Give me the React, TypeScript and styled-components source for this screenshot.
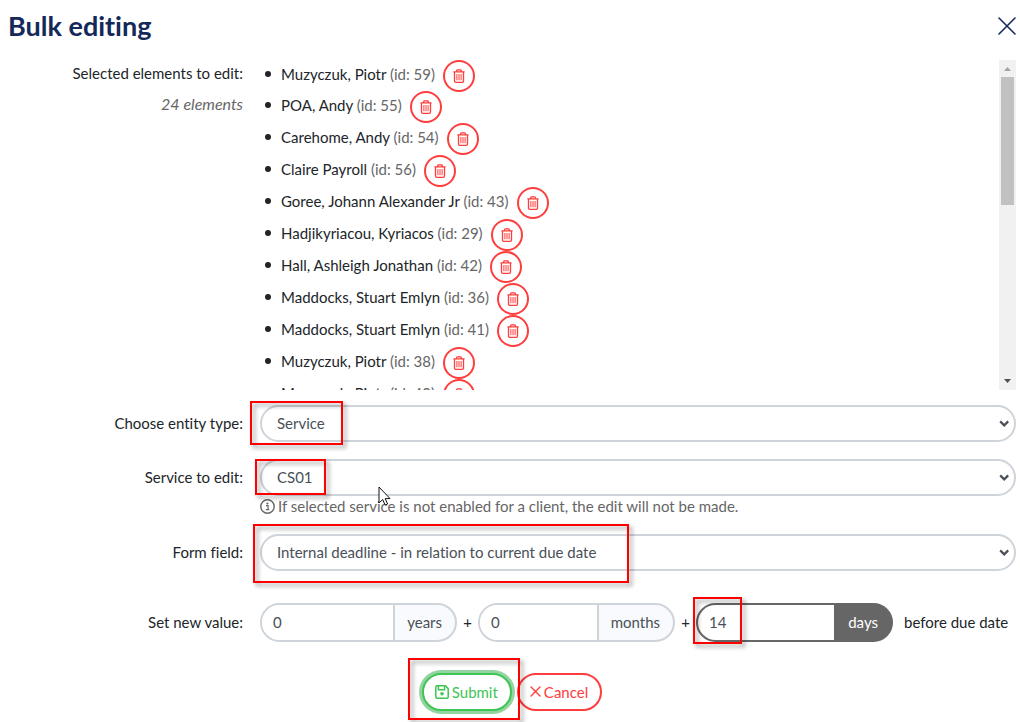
import React from "react";
import styled, { createGlobalStyle } from "styled-components";

const GlobalStyle = createGlobalStyle`
  *, *::before, *::after { box-sizing: border-box; }
  body {
    margin: 0;
    background: #fff;
    color: #212529;
    font: 15px/24px Lato, "Liberation Sans", sans-serif;
    font-variant-ligatures: none;
  }
  button, input, select {
    font: inherit;
    font-variant-ligatures: inherit;
  }
`;

const Page = styled.main`
  padding: 0 4px 11px 8px;
`;

const Header = styled.header`
  display: flex;
  align-items: center;
  justify-content: space-between;
  height: 60px;
  padding-bottom: 8px;
`;

const Title = styled.h1`
  margin: 0;
  color: #14295a;
  font-size: 27px;
  line-height: 34px;
  font-weight: 700;
`;

const CloseButton = styled.button`
  display: flex;
  padding: 0;
  border: 0;
  background: none;
  color: #14295a;
`;

const FormRow = styled.div<{ $gap?: number }>`
  display: grid;
  grid-template-columns: minmax(0, 1fr) minmax(0, 3fr);
  align-items: start;
  margin-bottom: ${(p) => p.$gap ?? 17}px;
`;

const LabelCell = styled.div<{ $top?: number }>`
  padding: ${(p) => p.$top ?? 6}px 17px 0 0;
  text-align: right;
`;

const Count = styled.p`
  margin: 7px 0 0;
  color: #666;
  font-size: 16px;
  font-style: italic;
`;

const ListPane = styled.div`
  display: flex;
  height: 330px;
  overflow: hidden;
`;

const ElementList = styled.ul`
  flex: 1;
  margin: 0;
  padding: 0 0 0 5px;
  list-style: none;
`;

const ElementItem = styled.li`
  display: flex;
  align-items: flex-start;
  gap: 8px;
  height: 32px;

  &:first-child { height: 31px; }

  &::before {
    content: "";
    width: 6px;
    height: 6px;
    margin: 11px 2px 0 0;
    border-radius: 50%;
    background: #212529;
  }
`;

const ElementName = styled.span`
  padding-top: 2px;
`;

const Muted = styled.span`
  color: #666;
`;

const DeleteButton = styled.button`
  display: flex;
  flex-shrink: 0;
  align-items: center;
  justify-content: center;
  width: 32px;
  height: 32px;
  padding: 0;
  border: 2px solid #ff3d3d;
  border-radius: 50%;
  background: #fff;
  color: #ff3d3d;
`;

const Scrollbar = styled.div`
  display: flex;
  flex-direction: column;
  width: 17px;
  background: #f1f1f1;
`;

const ScrollArrow = styled.svg`
  width: 17px;
  height: 17px;
`;

const ScrollTrack = styled.div`
  flex: 1;
  padding: 0 2px;
`;

const ScrollThumb = styled.div`
  height: 128px;
  background: #c1c1c1;
`;

const Field = styled.div`
  position: relative;
`;

const Select = styled.select`
  appearance: none;
  display: block;
  width: 100%;
  height: 37px;
  padding: 0 24px 1px 15px;
  border: 2px solid #ced4da;
  border-radius: 19px;
  background: #fff;
  color: #495057;
`;

const Chevron = styled.svg`
  position: absolute;
  top: 15px;
  right: 6px;
  pointer-events: none;
`;

const Help = styled.p`
  display: flex;
  align-items: center;
  gap: 3px;
  margin: 0;
  color: #666;
  line-height: 20px;
`;

const Values = styled.div`
  display: flex;
  align-items: center;
`;

const Plus = styled.span`
  width: 21px;
  padding-bottom: 2px;
  text-align: center;
`;

const Suffix = styled.span`
  padding: 0 0 1px 11px;
  white-space: nowrap;
`;

const UnitGroup = styled.div<{ $dark?: boolean }>`
  position: relative;
  display: flex;
  flex: 0 1 197px;
  min-width: 0;
  height: 39px;
  border: 2px solid ${(p) => (p.$dark ? "#666" : "#ced4da")};
  border-radius: 20px;
  background: ${(p) => (p.$dark ? "#666" : "#f8fafd")};
`;

const UnitInput = styled.input`
  flex: 1;
  min-width: 0;
  padding: 0 11px 1px;
  border: 0;
  border-radius: 18px 0 0 18px;
  background: #fff;
  color: #495057;
  outline: none;
`;

const UnitLabel = styled.label<{ $dark?: boolean }>`
  display: flex;
  align-items: center;
  padding: 0 13px 1px ${(p) => (p.$dark ? 14 : 12)}px;
  border-left: ${(p) => (p.$dark ? "0" : "2px solid #ced4da")};
  color: ${(p) => (p.$dark ? "#fff" : "#495057")};
`;

const Actions = styled.div`
  display: flex;
  justify-content: center;
  gap: 5px;
`;

const ActionSlot = styled.div`
  position: relative;
`;

const ActionButton = styled.button<{ $tone: string; $ring?: string }>`
  display: flex;
  align-items: center;
  gap: 3px;
  height: 38px;
  padding: 0 12px 1px 11px;
  border: 2px solid ${(p) => p.$tone};
  border-radius: 19px;
  background: #fff;
  color: ${(p) => p.$tone};
  box-shadow: ${(p) => (p.$ring ? `0 0 0 3px ${p.$ring}` : "none")};
`;

const Highlight = styled.div<{ $x: number; $y: number; $w: number; $h: number }>`
  position: absolute;
  z-index: 1;
  left: ${(p) => p.$x}px;
  top: ${(p) => p.$y}px;
  width: ${(p) => p.$w}px;
  height: ${(p) => p.$h}px;
  border: 2px solid #fe0000;
  filter: drop-shadow(3px 3px 2px rgba(0, 0, 0, 0.4));
  pointer-events: none;
`;

const Pointer = styled.svg`
  position: absolute;
  z-index: 2;
  left: 118px;
  top: 27px;
  pointer-events: none;
`;

const elements = [
  ["Muzyczuk, Piotr", 59],
  ["POA, Andy", 55],
  ["Carehome, Andy", 54],
  ["Claire Payroll", 56],
  ["Goree, Johann Alexander Jr", 43],
  ["Hadjikyriacou, Kyriacos", 29],
  ["Hall, Ashleigh Jonathan", 42],
  ["Maddocks, Stuart Emlyn", 36],
  ["Maddocks, Stuart Emlyn", 41],
  ["Muzyczuk, Piotr", 38],
  ["Muzyczuk, Piotr", 40],
] as const;

const Cross = ({ size, stroke }: { size: number; stroke: number }) => (
  <svg width={size} height={size} viewBox={`0 0 ${size} ${size}`} aria-hidden="true">
    <path
      d={`M1 1L${size - 1} ${size - 1}M${size - 1} 1L1 ${size - 1}`}
      fill="none"
      stroke="currentColor"
      strokeWidth={stroke}
      strokeLinecap="round"
    />
  </svg>
);

const TrashIcon = () => (
  <svg width="12" height="14" viewBox="0 0 12 14" fill="none" stroke="currentColor" aria-hidden="true">
    <path d="M.4 2.8h11.2M3.2 2.6L4.2.8h3.6l1 1.8" strokeWidth="1.3" strokeLinejoin="round" />
    <path d="M1.5 3v9q0 1.3 1.3 1.3h6.4q1.3 0 1.3-1.3V3" strokeWidth="1.3" />
    <path d="M3.9 5v6.3M6 5v6.3M8.1 5v6.3" strokeWidth="1" />
  </svg>
);

const SaveIcon = () => (
  <svg width="14" height="14" viewBox="0 0 14 14" fill="none" stroke="currentColor" strokeWidth="1.5" aria-hidden="true">
    <path d="M2 .8h8.4l2.8 2.8V12q0 1.2-1.2 1.2H2Q.8 13.2.8 12V2Q.8.8 2 .8z" strokeLinejoin="round" />
    <path d="M3.4 1v3.8h6.2V1" />
    <circle cx="7" cy="8.8" r="1.8" fill="currentColor" stroke="none" />
  </svg>
);

const InfoIcon = () => (
  <svg width="15" height="15" viewBox="0 0 15 15" aria-hidden="true">
    <circle cx="7.5" cy="7.5" r="6.7" fill="none" stroke="currentColor" strokeWidth="1.4" />
    <circle cx="7.4" cy="4.5" r="1.1" fill="currentColor" />
    <path d="M6 6.6h2.1v4M5.8 10.7h3.5" fill="none" stroke="currentColor" strokeWidth="1.2" />
  </svg>
);

const Dropdown = ({ id, value }: { id: string; value: string }) => (
  <>
    <Select id={id}>
      <option>{value}</option>
    </Select>
    <Chevron width="11" height="8" viewBox="0 0 11 8" aria-hidden="true">
      <path d="M1.2 1.4L5.2 5.4 9.2 1.4" fill="none" stroke="#495057" strokeWidth="2.2" />
    </Chevron>
  </>
);

export default function App() {
  return (
    <>
      <GlobalStyle />
      <Page>
        <Header>
          <Title>Bulk editing</Title>
          <CloseButton aria-label="Close">
            <Cross size={18} stroke={1.6} />
          </CloseButton>
        </Header>

        <form onSubmit={(e) => e.preventDefault()}>
          <FormRow $gap={15}>
            <LabelCell $top={1}>
              <span id="selected">Selected elements to edit:</span>
              <Count>24 elements</Count>
            </LabelCell>
            <ListPane>
              <ElementList aria-labelledby="selected">
                {elements.map(([name, id]) => (
                  <ElementItem key={id}>
                    <ElementName>
                      {name} <Muted>(id: {id})</Muted>
                    </ElementName>
                    <DeleteButton type="button" aria-label={`Remove ${name}`}>
                      <TrashIcon />
                    </DeleteButton>
                  </ElementItem>
                ))}
              </ElementList>
              <Scrollbar aria-hidden="true">
                <ScrollArrow viewBox="0 0 17 17">
                  <path d="M5 11h7L8.5 7z" fill="#a3a3a3" />
                </ScrollArrow>
                <ScrollTrack>
                  <ScrollThumb />
                </ScrollTrack>
                <ScrollArrow viewBox="0 0 17 17">
                  <path d="M5 6h7L8.5 10z" fill="#505050" />
                </ScrollArrow>
              </Scrollbar>
            </ListPane>
          </FormRow>

          <FormRow>
            <LabelCell>
              <label htmlFor="entity">Choose entity type:</label>
            </LabelCell>
            <Field>
              <Dropdown id="entity" value="Service" />
              <Highlight $x={-10} $y={-4} $w={93} $h={44} />
            </Field>
          </FormRow>

          <FormRow $gap={18}>
            <LabelCell>
              <label htmlFor="service">Service to edit:</label>
            </LabelCell>
            <Field>
              <Dropdown id="service" value="CS01" />
              <Help>
                <InfoIcon />
                If selected service is not enabled for a client, the edit will not be made.
              </Help>
              <Highlight $x={-5} $y={0} $w={71} $h={36} />
              <Pointer width="13" height="20" viewBox="0 0 13 20">
                <path
                  d="M1 1v16l3.7-3.5 2.4 5.6 2.5-1.1-2.4-5.4H12z"
                  fill="#fff"
                  stroke="#111"
                  strokeWidth="1"
                />
              </Pointer>
            </Field>
          </FormRow>

          <FormRow $gap={32}>
            <LabelCell>
              <label htmlFor="field">Form field:</label>
            </LabelCell>
            <Field>
              <Dropdown id="field" value="Internal deadline - in relation to current due date" />
              <Highlight $x={-7} $y={-10} $w={376} $h={59} />
            </Field>
          </FormRow>

          <FormRow $gap={31}>
            <LabelCell $top={7}>
              <label htmlFor="years">Set new value:</label>
            </LabelCell>
            <Values>
              <UnitGroup>
                <UnitInput id="years" defaultValue="0" />
                <UnitLabel htmlFor="years">years</UnitLabel>
              </UnitGroup>
              <Plus>+</Plus>
              <UnitGroup>
                <UnitInput id="months" defaultValue="0" />
                <UnitLabel htmlFor="months">months</UnitLabel>
              </UnitGroup>
              <Plus>+</Plus>
              <UnitGroup $dark>
                <UnitInput id="days" defaultValue="14" />
                <UnitLabel htmlFor="days" $dark>
                  days
                </UnitLabel>
                <Highlight $x={-5} $y={-8} $w={49} $h={47} />
              </UnitGroup>
              <Suffix>before due date</Suffix>
            </Values>
          </FormRow>

          <Actions>
            <ActionSlot>
              <ActionButton type="submit" $tone="#3ec554" $ring="#94d3a2">
                <SaveIcon />
                Submit
              </ActionButton>
              <Highlight $x={-14} $y={-15} $w={112} $h={62} />
            </ActionSlot>
            <ActionButton type="button" $tone="#ff3d3d">
              <Cross size={11} stroke={1.4} />
              Cancel
            </ActionButton>
          </Actions>
        </form>
      </Page>
    </>
  );
}
